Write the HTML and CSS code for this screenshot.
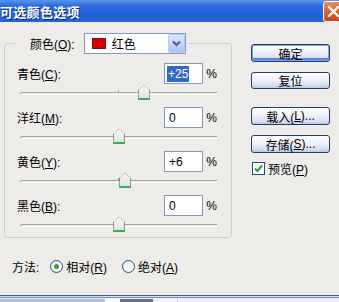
FILE: index.html
```html
<!DOCTYPE html>
<html lang="zh-CN">
<head>
  <meta charset="UTF-8">
  <title>可选颜色选项</title>
  <link rel="stylesheet" href="styles.css">
</head>
<body>
  <div class="window">
    <div class="titlebar">
      <span class="title">可选颜色选项</span>
      <span class="close">
        <svg width="21" height="21" viewBox="0 0 21 21">
          <path d="M6 6 L15 15 M15 6 L6 15" stroke="#fff" stroke-width="2.4" stroke-linecap="round"/>
        </svg>
      </span>
    </div>

    <div class="content">
      <div class="main">
        <fieldset class="group">
          <legend>
            <span>颜色(<u>O</u>):</span>
            <span class="combo">
              <span class="swatch"></span>
              <span class="combo-text">红色</span>
              <span class="drop">
                <svg width="9" height="7" viewBox="0 0 9 7"><path d="M1 1.5 L4.5 5 L8 1.5" fill="none" stroke="#4d6185" stroke-width="2"/></svg>
              </span>
            </span>
          </legend>

          <div class="row first">
            <span class="label">青色(<u>C</u>):</span>
            <span class="field"><span class="sel">+25</span></span>
            <span class="pct">%</span>
          </div>
          <div class="slider"><span class="track"></span><span class="tick"></span><span class="thumb" style="left: 121px"></span></div>

          <div class="row">
            <span class="label">洋红(<u>M</u>):</span>
            <span class="field">0</span>
            <span class="pct">%</span>
          </div>
          <div class="slider"><span class="track"></span><span class="tick"></span><span class="thumb" style="left: 96px"></span></div>

          <div class="row">
            <span class="label">黄色(<u>Y</u>):</span>
            <span class="field">+6</span>
            <span class="pct">%</span>
          </div>
          <div class="slider"><span class="track"></span><span class="tick"></span><span class="thumb" style="left: 102px"></span></div>

          <div class="row">
            <span class="label">黑色(<u>B</u>):</span>
            <span class="field">0</span>
            <span class="pct">%</span>
          </div>
          <div class="slider last"><span class="track"></span><span class="tick"></span><span class="thumb" style="left: 96px"></span></div>
        </fieldset>

        <div class="method">
          <span>方法:</span>
          <span class="radio on"></span><span>相对(<u>R</u>)</span>
          <span class="radio second"></span><span>绝对(<u>A</u>)</span>
        </div>
      </div>

      <div class="side">
        <div class="btn default">确定</div>
        <div class="btn reset">复位</div>
        <div class="btn load">载入(<u>L</u>)...</div>
        <div class="btn save">存储(<u>S</u>)...</div>
        <div class="check">
          <span class="box">
            <svg width="11" height="11" viewBox="0 0 11 11"><path d="M2 5.5 L4.5 8 L9 2.5" fill="none" stroke="#21a121" stroke-width="2"/></svg>
          </span>
          <span>预览(<u>P</u>)</span>
        </div>
      </div>
    </div>

    <div class="taskbar">
      <span class="seg grey"></span>
      <span class="seg white"></span>
      <span class="seg dark"></span>
      <span class="seg light"></span>
      <span class="seg rest"></span>
    </div>
  </div>
</body>
</html>
```

FILE: styles.css
```css
body {
  margin: 0;
  width: 339px;
  height: 302px;
  overflow: hidden;
  font-family: "Liberation Sans", "Noto Sans CJK SC", sans-serif;
  font-size: 12px;
  color: #000;
  background: #edece8;
}
u {
  text-decoration: underline;
}
.window {
  display: flex;
  flex-direction: column;
  height: 302px;
}
.titlebar {
  height: 22px;
  display: flex;
  align-items: center;
  background: linear-gradient(#5b95e9, #2f6edc 25%, #2060d6 70%, #2a66d2);
  overflow: hidden;
}
.title {
  color: #fff;
  font-weight: bold;
  font-size: 13px;
  text-shadow: 1px 1px 0 #0a2d80;
  letter-spacing: 0.3px;
}
.close {
  margin-left: auto;
  margin-right: -5px;
  width: 21px;
  height: 21px;
  box-sizing: border-box;
  border: 1px solid #fff;
  border-radius: 3px;
  background: linear-gradient(#eb8a62, #d85a30 60%, #c9461d);
  display: flex;
}
.close svg {
  margin: -1px;
}
.content {
  flex: 1;
  display: flex;
}
.main {
  width: 240px;
  padding-top: 11px;
}
.group {
  box-sizing: border-box;
  width: 228px;
  margin: 0 0 0 4px;
  padding: 0 14px 0 12px;
  border: 1px solid #cfcfc6;
  border-radius: 3px;
}
.group legend {
  display: flex;
  align-items: center;
  padding: 0 2px 0 15px;
  margin-left: -2px;
}
.combo {
  margin-left: 9px;
  box-sizing: border-box;
  width: 102px;
  height: 21px;
  border: 1px solid #7f9db9;
  background: #fff;
  display: flex;
  align-items: center;
}
.swatch {
  width: 14px;
  height: 11px;
  margin-left: 7px;
  background: #d80000;
  border: 1px solid #7a1010;
  box-sizing: border-box;
}
.combo-text {
  margin-left: 6px;
}
.drop {
  margin-left: auto;
  width: 17px;
  height: 19px;
  box-sizing: border-box;
  border: 1px solid #b7c9f3;
  border-radius: 2px;
  background: linear-gradient(#dce6fc, #c0d1f6 60%, #b0c4f0);
  display: flex;
  align-items: center;
  justify-content: center;
}
.row {
  display: flex;
  align-items: center;
  height: 21px;
}
.row.first {
  margin-top: 9px;
}
.label {
  flex: 1;
}
.field {
  box-sizing: border-box;
  width: 39px;
  height: 21px;
  border: 1px solid #7f9db9;
  background: #fff;
  padding-left: 4px;
  display: flex;
  align-items: center;
}
.sel {
  background: #316ac5;
  color: #fff;
  padding: 1px 1px;
  margin-left: -2px;
}
.pct {
  width: 14px;
  text-align: right;
}
.slider {
  position: relative;
  height: 23px;
}
.slider.last {
  height: 21px;
}
.track {
  position: absolute;
  left: 3px;
  top: 8px;
  width: 196px;
  height: 1px;
  border-top: 1px solid #a3a39b;
  border-bottom: 1px solid #fff;
  border-left: 1px solid #b0b0a8;
  border-radius: 2px 0 0 2px;
}
.tick {
  position: absolute;
  left: 101px;
  top: 6px;
  width: 1px;
  height: 3px;
  background: #a3a39b;
}
.thumb {
  position: absolute;
  top: 1px;
  width: 12px;
  height: 15px;
  box-sizing: border-box;
  border: 1px solid #8e9a8e;
  border-top: none;
  border-bottom: 2px solid #36b05a;
  background: linear-gradient(#f6f8f4, #dde6dc);
  clip-path: polygon(50% 0, 100% 35%, 100% 100%, 0 100%, 0 35%);
}
.thumb::before {
  content: "";
  position: absolute;
  left: -1px;
  right: -1px;
  top: 0;
  height: 5px;
  background: linear-gradient(to bottom right, transparent 48%, #8e9a8e 50%, transparent 60%),
              linear-gradient(to bottom left, transparent 48%, #8e9a8e 50%, transparent 60%);
  background-size: 50% 100%;
  background-position: left top, right top;
  background-repeat: no-repeat;
}
.method {
  display: flex;
  align-items: center;
  height: 14px;
  margin-top: 21px;
  padding-left: 12px;
}
.radio {
  width: 13px;
  height: 13px;
  box-sizing: border-box;
  border: 1px solid #1c5180;
  border-radius: 50%;
  background: #f4f4f0;
  margin: 0 3px 0 11px;
  display: flex;
  align-items: center;
  justify-content: center;
}
.radio.on::after {
  content: "";
  width: 5px;
  height: 5px;
  border-radius: 50%;
  background: #35a53a;
}
.radio.second {
  margin-left: 15px;
}
.side {
  padding: 22px 0 0 11px;
  display: flex;
  flex-direction: column;
}
.btn {
  box-sizing: border-box;
  width: 79px;
  height: 18px;
  border: 1px solid #1e3f6e;
  border-radius: 3px;
  background: linear-gradient(#ffffff, #eef1f8 45%, #d4dcef 85%, #b9c6e4);
  display: flex;
  align-items: center;
  justify-content: center;
}
.btn.default {
  box-shadow: inset 0 0 0 1px #7fa2e6, inset 0 -2px 0 1px #5f86d6;
}
.btn.reset {
  margin-top: 10px;
  height: 17px;
}
.btn.load {
  margin-top: 18px;
}
.btn.save {
  margin-top: 10px;
}
.check {
  margin-top: 7px;
  display: flex;
  align-items: center;
  gap: 3px;
  padding-left: 1px;
}
.box {
  width: 13px;
  height: 13px;
  box-sizing: border-box;
  border: 1px solid #1c5180;
  background: #fff;
  display: flex;
  align-items: center;
  justify-content: center;
}
.taskbar {
  height: 7px;
  display: flex;
  border-top: 1px solid #3c5b8c;
  box-shadow: inset 0 1px 0 #d3def0, inset 0 2px 0 #7a92bd;
  box-sizing: border-box;
  padding-top: 3px;
}
.seg {
  height: 100%;
}
.seg.grey { width: 105px; background: #b7bfd3; }
.seg.white { width: 15px; background: #fafbfd; }
.seg.dark { width: 33px; background: #6a7182; }
.seg.light { width: 24px; background: #f2f4f8; border-right: 1px solid #c5ccd8; }
.seg.rest { flex: 1; background: #eef1f6; }
```
